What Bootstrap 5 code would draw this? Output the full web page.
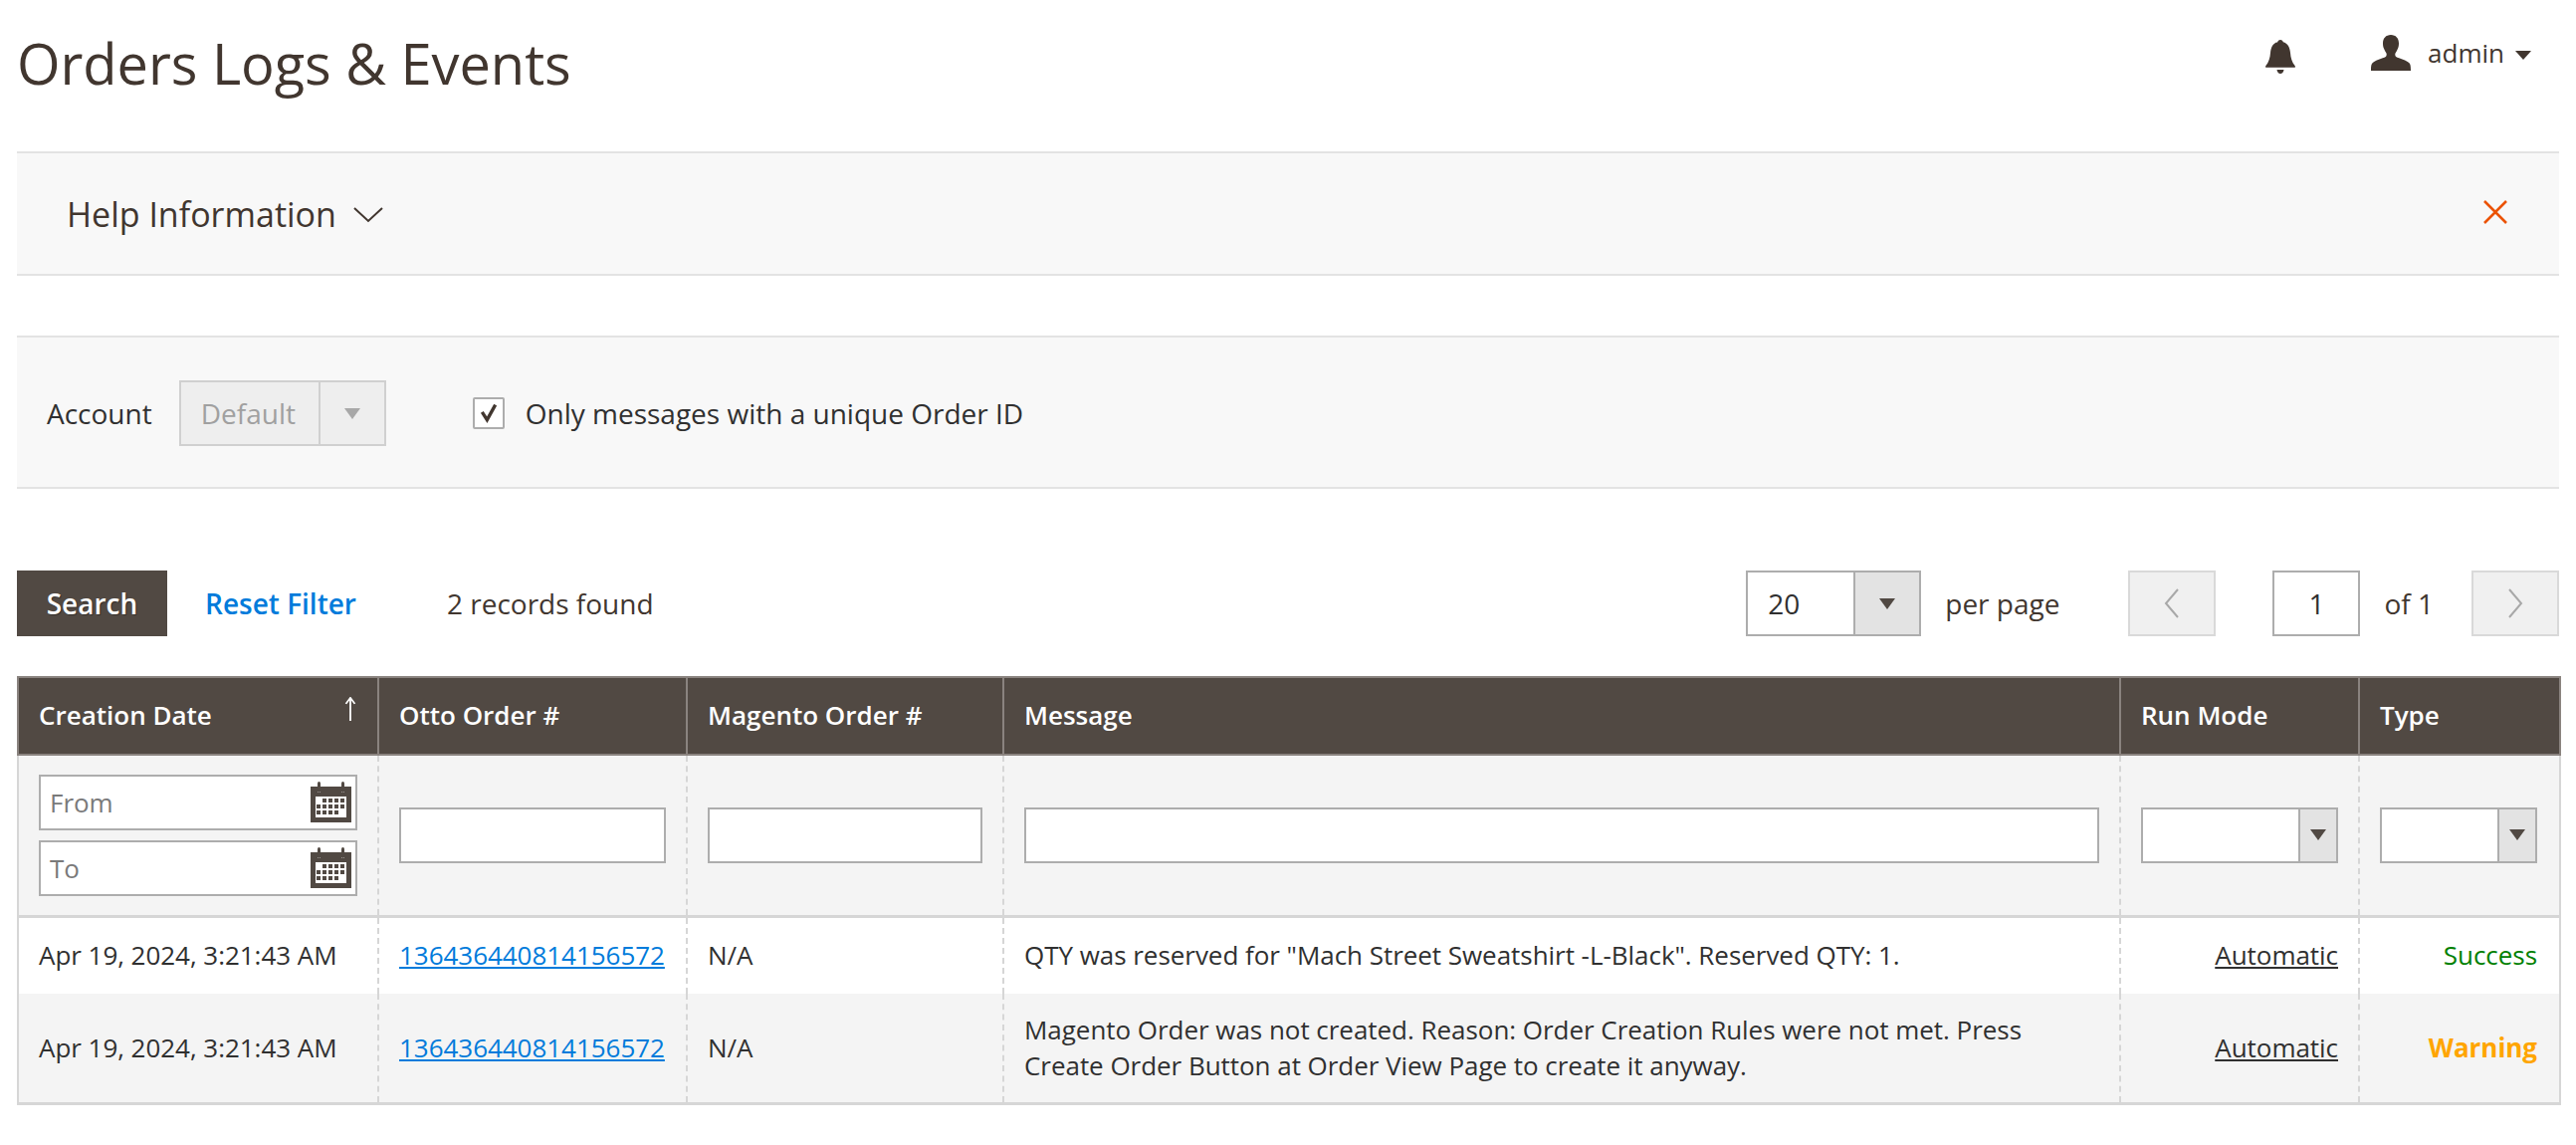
<!DOCTYPE html>
<html lang="en">
<head>
<meta charset="utf-8">
<title>Orders Logs &amp; Events</title>
<link href="https://cdn.jsdelivr.net/npm/bootstrap@5.3.0/dist/css/bootstrap.min.css" rel="stylesheet">
<style>
body{font-family:"Open Sans",sans-serif;color:#41362f;background:#fff;font-size:28px;}
.page-wrap{padding:0 17px;}
.top-bar{height:152px;}
.page-name{font-size:56px;font-weight:400;line-height:76px;margin:25px 0 0;color:#41362f;letter-spacing:-.05px;}
.top-actions{padding-top:35px;padding-right:28px;}
.bell-ico{width:30px;height:35px;margin-top:5px;margin-right:76px;display:block;}
.user-ico{width:40px;height:36px;margin-right:17px;display:block;}
.admin-name{font-size:26px;line-height:36px;margin-right:11px;}
.caret-down{width:0;height:0;border-left:8px solid transparent;border-right:8px solid transparent;border-top:9px solid #41362f;}
.panel-bar{background:#f8f8f8;border-top:2px solid #e3e3e3;border-bottom:2px solid #e3e3e3;}
.help-bar{height:125px;padding:0 52px 0 50px;}
.help-title{font-size:34px;font-weight:400;margin-right:17px;color:#41362f;padding-top:2px;}
.help-chev{margin-top:3px;}
.help-x{margin-bottom:3px;}
.account-bar{height:154px;margin-top:60px;padding-left:30px;padding-top:2px;}
.acc-label{font-size:28px;color:#303030;margin-right:27px;}
.fake-select{display:flex;background:#fff;border:2px solid #adadad;box-sizing:border-box;}
.fake-select .val{flex:1;}
.fake-select .arrow-box{background:#e3e3e3;border-left:2px solid #adadad;display:flex;align-items:center;justify-content:center;}
.tri{width:0;height:0;border-left:8px solid transparent;border-right:8px solid transparent;border-top:11px solid #514943;}
.acc-select{width:208px;height:66px;background:#eee;border-color:#d0d0d0;color:#a0a0a0;font-size:28px;line-height:62px;margin-right:87px;}
.acc-select .val{padding-left:20px;}
.acc-select .arrow-box{width:66px;background:#eee;border-left-color:#d0d0d0;}
.acc-select .tri{border-top-color:#a8a8a8;}
.tick-box{width:32px;height:32px;border:2px solid #adadad;background:#fff;border-radius:2px;margin-right:21px;display:flex;align-items:center;justify-content:center;}
.tick-label{font-size:28px;color:#303030;}
.tool-row{height:66px;margin-top:82px;margin-bottom:40px;}
.search-btn{width:151px;height:66px;background:#514943;color:#fff;border:0;border-radius:0;font-size:28px;font-weight:600;padding:0;text-shadow:1px 1px 1px rgba(0,0,0,.35);margin-right:38px;}
.search-btn:hover{background:#514943;color:#fff;}
.reset-link{font-size:28px;font-weight:600;color:#007bdb;text-decoration:none;margin-right:91px;}
.count-text{font-size:28px;color:#41362f;}
.per-select{width:176px;height:66px;font-size:28px;line-height:62px;color:#303030;margin-right:24px;}
.per-select .val{padding-left:20px;}
.per-select .arrow-box{width:66px;}
.per-label{font-size:28px;margin-right:69px;}
.nav-box{width:88px;height:66px;background:#f0f0f0;border:2px solid #d9d9d9;display:flex;align-items:center;justify-content:center;}
.page-input{width:88px;height:66px;border:2px solid #adadad;background:#fff;font-size:28px;color:#303030;display:flex;align-items:center;justify-content:center;margin:0 24px 0 57px;}
.of-label{font-size:28px;margin-right:38px;}
.orders-grid{width:2554px;table-layout:fixed;border-collapse:collapse;margin:0;font-size:26px;color:#303030;}
.orders-grid .c1{width:362px}.orders-grid .c2{width:310px}.orders-grid .c3{width:318px}
.orders-grid .c4{width:1122px}.orders-grid .c5{width:240px}.orders-grid .c6{width:202px}
.orders-grid th{background:#514943;color:#fff;font-weight:600;font-size:26px;height:78px;padding:0 20px 2px;border:2px solid #8a837f;vertical-align:middle;}
.orders-grid td{padding:0 20px;border-left:2px dashed #d6d6d6;border-right:2px dashed #d6d6d6;vertical-align:middle;line-height:36px;letter-spacing:-.04px;}
.orders-grid td:first-child{border-left:2px solid #d6d6d6;}
.orders-grid td:last-child{border-right:2px solid #d6d6d6;padding-right:22px;}
.sort-wrap{display:flex;justify-content:space-between;align-items:flex-start;}
.sort-arrow{width:12px;height:24px;display:block;margin:1px 1px 0 0;}
.filter-line td{background:#f4f4f4;height:162px;border-bottom:3px solid #d6d6d6;}
.orders-grid .row-light td{background:#fff;height:78px;padding-bottom:2px;}
.row-shade td{background:#f4f4f4;height:110px;border-bottom:3px solid #d6d6d6;}
.flt-input{width:100%;height:56px;border:2px solid #adadad;background:#fff;display:block;}
.date-input{height:56px;border:2px solid #adadad;background:#fff;display:flex;align-items:center;justify-content:space-between;padding:0 4px 0 9px;color:#7a7a7a;font-size:26px;}
.date-input + .date-input{margin-top:10px;}
.cal-ico{width:41px;height:41px;display:block;}
.flt-select{height:56px;width:100%;}
.flt-select .arrow-box{width:38px;}
.order-link{color:#007bdb;text-decoration:underline;}
.mode-link{color:#303030;text-decoration:underline;}
.st-ok{color:#008000;}
.st-warn{color:#ffa500;font-weight:700;}
</style>
</head>
<body>
<div class="page-wrap">
  <div class="top-bar d-flex justify-content-between align-items-start">
    <h1 class="page-name">Orders Logs &amp; Events</h1>
    <div class="top-actions d-flex align-items-start">
      <svg class="bell-ico" viewBox="0 0 30 35" aria-hidden="true"><path fill="#41362f" d="M15 0c1.600 0 2.600 1 2.800 2.300C22.500 3.600 24.500 7.500 25 13c.4 5 1.600 9.500 4.600 13 .8 1 .2 1.800-.8 1.800H1.200c-1 0-1.600-.8-.8-1.800C3.400 22.500 4.600 18 5 13c.5-5.500 2.500-9.400 7.200-10.700C12.400 1 13.400 0 15 0z"/><path fill="#41362f" d="M11.500 30h7c-.4 2.500-1.800 4-3.500 4s-3.100-1.500-3.500-4z"/></svg>
      <svg class="user-ico" viewBox="0 0 40 36" aria-hidden="true"><path fill="#41362f" d="M20 0c5 0 8 3.500 8 8.500 0 2.200-.3 3.500-.9 5-.6 1.800-1.500 3.500-2.600 5-.4.800-.3 2.800.7 3.500 3 1.800 11 3.500 13.500 6.500.8 1 1.300 2.500 1.300 7.500H0c0-5 .5-6.500 1.300-7.500C3.800 25.500 11.800 23.800 14.800 22c1-.7 1.100-2.700.7-3.500-1.100-1.500-2-3.200-2.600-5-.6-1.500-.9-2.800-.9-5C12 3.500 15 0 20 0z"/></svg>
      <span class="admin-name">admin</span>
      <span class="caret-down mt-3"></span>
    </div>
  </div>

  <div class="panel-bar help-bar d-flex align-items-center justify-content-between">
    <div class="d-flex align-items-center">
      <span class="help-title">Help Information</span>
      <svg class="help-chev" width="30" height="16" viewBox="0 0 30 16" aria-hidden="true"><path d="M1 1l14 13L29 1" fill="none" stroke="#41362f" stroke-width="2"/></svg>
    </div>
    <svg class="help-x" width="24" height="24" viewBox="0 0 24 24" aria-hidden="true"><path d="M1 1l22 22M23 1L1 23" fill="none" stroke="#eb5202" stroke-width="2.500"/></svg>
  </div>

  <div class="panel-bar account-bar d-flex align-items-center">
    <span class="acc-label">Account</span>
    <div class="fake-select acc-select"><span class="val">Default</span><span class="arrow-box"><span class="tri"></span></span></div>
    <span class="tick-box"><svg width="20" height="20" viewBox="0 0 18 18" aria-hidden="true"><path d="M3 8l4.500 7L15 1.500" fill="none" stroke="#41362f" stroke-width="3"/></svg></span>
    <span class="tick-label">Only messages with a unique Order ID</span>
  </div>

  <div class="tool-row d-flex align-items-center">
    <button type="button" class="btn search-btn">Search</button>
    <a href="#" class="reset-link">Reset Filter</a>
    <span class="count-text">2 records found</span>
    <div class="ms-auto d-flex align-items-center">
      <div class="fake-select per-select"><span class="val">20</span><span class="arrow-box"><span class="tri"></span></span></div>
      <span class="per-label">per page</span>
      <span class="nav-box"><svg width="16" height="30" viewBox="0 0 16 30" aria-hidden="true"><path d="M14 1L2 15l12 14" fill="none" stroke="#a8a8a8" stroke-width="2"/></svg></span>
      <span class="page-input">1</span>
      <span class="of-label">of 1</span>
      <span class="nav-box"><svg width="16" height="30" viewBox="0 0 16 30" aria-hidden="true"><path d="M2 1l12 14L2 29" fill="none" stroke="#a8a8a8" stroke-width="2"/></svg></span>
    </div>
  </div>

  <table class="orders-grid">
    <colgroup><col class="c1"><col class="c2"><col class="c3"><col class="c4"><col class="c5"><col class="c6"></colgroup>
    <thead>
      <tr>
        <th><div class="sort-wrap"><span>Creation Date</span><svg class="sort-arrow" viewBox="0 0 12 28" preserveAspectRatio="none" aria-hidden="true"><path d="M6 28V2M1.500 8L6 1l4.500 7" fill="none" stroke="#fff" stroke-width="1.800"/></svg></div></th>
        <th>Otto Order #</th>
        <th>Magento Order #</th>
        <th>Message</th>
        <th>Run Mode</th>
        <th>Type</th>
      </tr>
    </thead>
    <tbody>
      <tr class="filter-line">
        <td>
          <div class="date-input"><span>From</span><svg class="cal-ico" viewBox="0 0 41 41" aria-hidden="true"><use href="#cal"/></svg></div>
          <div class="date-input"><span>To</span><svg class="cal-ico" viewBox="0 0 41 41" aria-hidden="true"><use href="#cal"/></svg></div>
        </td>
        <td><span class="flt-input"></span></td>
        <td><span class="flt-input"></span></td>
        <td><span class="flt-input"></span></td>
        <td><div class="fake-select flt-select"><span class="val"></span><span class="arrow-box"><span class="tri"></span></span></div></td>
        <td><div class="fake-select flt-select"><span class="val"></span><span class="arrow-box"><span class="tri"></span></span></div></td>
      </tr>
      <tr class="row-light">
        <td>Apr 19, 2024, 3:21:43 AM</td>
        <td><a href="#" class="order-link">136436440814156572</a></td>
        <td>N/A</td>
        <td>QTY was reserved for "Mach Street Sweatshirt -L-Black". Reserved QTY: 1.</td>
        <td class="text-end"><a href="#" class="mode-link">Automatic</a></td>
        <td class="text-end st-ok">Success</td>
      </tr>
      <tr class="row-shade">
        <td>Apr 19, 2024, 3:21:43 AM</td>
        <td><a href="#" class="order-link">136436440814156572</a></td>
        <td>N/A</td>
        <td>Magento Order was not created. Reason: Order Creation Rules were not met. Press Create Order Button at Order View Page to create it anyway.</td>
        <td class="text-end"><a href="#" class="mode-link">Automatic</a></td>
        <td class="text-end st-warn">Warning</td>
      </tr>
    </tbody>
  </table>
</div>
<svg width="0" height="0" class="d-block" aria-hidden="true"><defs>
  <g id="cal">
    <path fill="#514943" d="M0 5h7v6h3V5h21v6h3V5h7v36H0z"/>
    <rect x="7" y="0" width="3" height="11" rx="1.500" fill="#514943"/><rect x="31" y="0" width="3" height="11" rx="1.500" fill="#514943"/>
    <rect x="5" y="15" width="31" height="21" fill="#fff"/>
    <g fill="#514943">
      <rect x="12" y="17" width="4" height="4"/><rect x="18" y="17" width="4" height="4"/><rect x="24" y="17" width="4" height="4"/><rect x="30" y="17" width="4" height="4"/>
      <rect x="6" y="23" width="4" height="4"/><rect x="12" y="23" width="4" height="4"/><rect x="18" y="23" width="4" height="4"/><rect x="24" y="23" width="4" height="4"/><rect x="30" y="23" width="4" height="4"/>
      <rect x="6" y="29" width="4" height="4"/><rect x="12" y="29" width="4" height="4"/><rect x="18" y="29" width="4" height="4"/><rect x="24" y="29" width="4" height="4"/>
    </g>
  </g>
</defs></svg>
</body>
</html>
